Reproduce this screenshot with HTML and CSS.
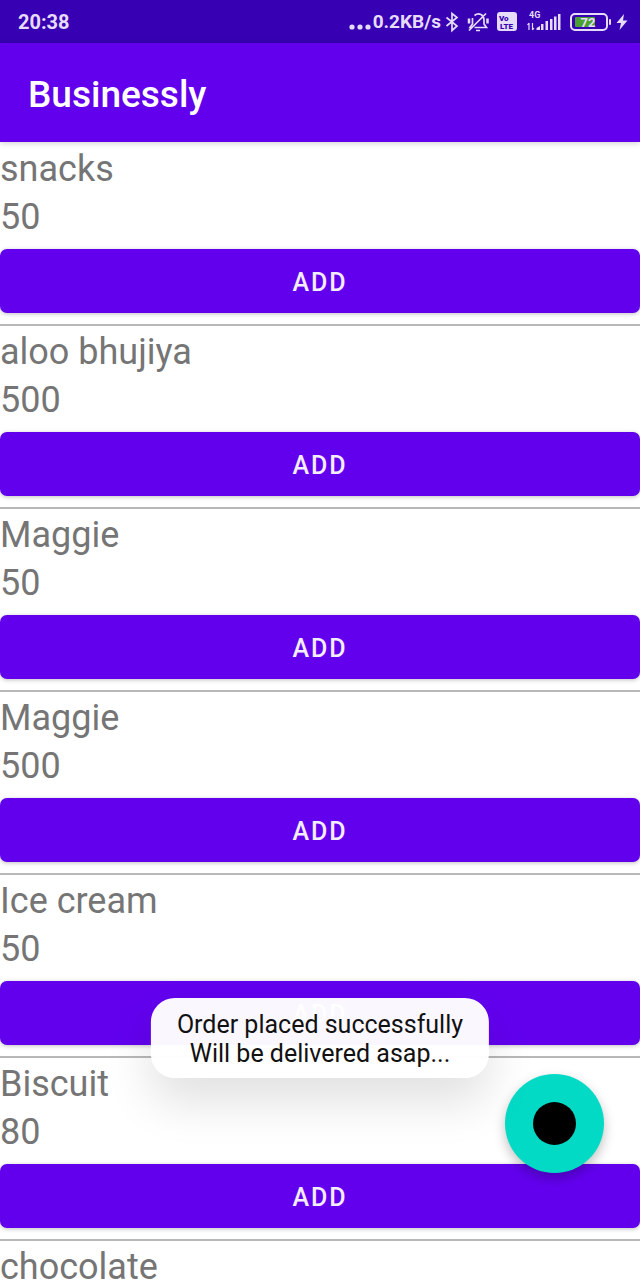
FILE: index.html
```html
<!DOCTYPE html>
<html lang="en">
<head>
<meta charset="utf-8">
<meta name="viewport" content="width=device-width, initial-scale=1">
<title>Businessly</title>
<link rel="stylesheet" href="styles.css">
</head>
<body>
<div class="screen">
  <div class="status-bar">
    <span class="clock">20:38</span>
    <div class="status-icons">
      <svg class="dots" width="24" height="24" viewBox="0 0 24 24" fill="currentColor" aria-hidden="true"><circle cx="4" cy="17" r="2.6"/><circle cx="12" cy="17" r="2.6"/><circle cx="20" cy="17" r="2.6"/></svg>
      <span class="speed">0.2KB/s</span>
      <svg class="bluetooth" width="14" height="22" viewBox="0 0 14 22" fill="none" stroke="currentColor" stroke-width="1.7" aria-label="Bluetooth"><path d="M1.5 6.500 12 15 7 19.500V2.500l5 4L1.500 15"/></svg>
      <svg class="bell" width="22" height="22" viewBox="0 0 22 22" fill="none" stroke="currentColor" stroke-width="1.7" aria-label="Silent"><path d="M7.500 4.500C12 1 17 4 17 9v4l2.500 3.500H7.500M5.500 7v6L3 16.500h1.500M9 19.500h4M19 2.500 2 19.500"/><path d="M2 7.500v5M20.500 7.500v5" stroke-width="2.500"/></svg>
      <svg class="volte" width="20" height="19" viewBox="0 0 20 19" aria-label="VoLTE"><rect width="20" height="19" rx="3" fill="currentColor"/><text x="2" y="9" class="volte-text">Vo</text><text x="3" y="17" class="volte-text">LTE</text></svg>
      <svg class="signal" width="34" height="24" viewBox="0 0 34 24" fill="currentColor" aria-label="Signal"><text x="2" y="8" class="network-text">4G</text><path d="M9.500 20v-2l3.500-2v4zM14 20v-6h2.500v6zM18.500 20v-9H21v9zM23 20V9h2.500v11zM27 20V6.500h2.500V20zM31 20V4h2.500v16z"/><path d="M2 20v-7M.5 15 2 13M5.500 13v7M7 18l-1.500 2" fill="none" stroke="currentColor" stroke-width="1.200"/></svg>
      <svg class="battery" width="42" height="20" viewBox="0 0 42 20" aria-label="Battery"><rect x="1" y="2" width="36" height="16" rx="4" fill="none" stroke="currentColor" stroke-width="2"/><rect x="5" y="5" width="20" height="10" rx="1" fill="#4ba12f"/><rect x="39" y="7" width="2" height="6" rx="1" fill="currentColor"/><text x="18" y="15" class="battery-text">72</text></svg>
      <svg class="bolt" width="12" height="18" viewBox="0 0 12 18" fill="currentColor" aria-label="Charging"><path d="M8 1 .5 10H5L3.500 17 11.500 7.500H7z"/></svg>
    </div>
  </div>
  <header class="app-bar"><h1 class="app-title">Businessly</h1></header>
  <main class="products">
    <section class="product"><h2 class="product-text">snacks</h2><p class="product-text">50</p><button class="add" type="button">ADD</button></section>
    <section class="product"><h2 class="product-text">aloo bhujiya</h2><p class="product-text">500</p><button class="add" type="button">ADD</button></section>
    <section class="product"><h2 class="product-text">Maggie</h2><p class="product-text">50</p><button class="add" type="button">ADD</button></section>
    <section class="product"><h2 class="product-text">Maggie</h2><p class="product-text">500</p><button class="add" type="button">ADD</button></section>
    <section class="product"><h2 class="product-text">Ice cream</h2><p class="product-text">50</p><button class="add" type="button">ADD</button></section>
    <section class="product"><h2 class="product-text">Biscuit</h2><p class="product-text">80</p><button class="add" type="button">ADD</button></section>
    <section class="product"><h2 class="product-text">chocolate</h2></section>
  </main>
  <button class="fab" type="button" aria-label="Place order"><span class="fab-dot"></span></button>
  <div class="toast" role="status">Order placed successfully<br>Will be delivered asap...</div>
</div>
</body>
</html>
```
FILE: styles.css
```css
* {
  box-sizing: border-box;
}

body {
  margin: 0;
  background: #fff;
  font-family: Roboto, "Liberation Sans", sans-serif;
}

.screen {
  position: relative;
  display: flex;
  flex-direction: column;
  height: 100vh;
  overflow: hidden;
}

.status-bar {
  display: flex;
  flex: none;
  align-items: center;
  justify-content: space-between;
  height: 43px;
  padding: 0 12px 0 18px;
  background: #3700b3;
  color: #e6dcfa;
  font-size: 20px;
  font-weight: 700;
}

.status-icons {
  display: flex;
  align-items: center;
}

.dots {
  margin-right: 1px;
}

.speed {
  font-size: 19px;
}

.bluetooth {
  margin-left: 4px;
}

.bell {
  margin-left: 8px;
}

.volte {
  margin-left: 8px;
}

.signal {
  margin-left: 10px;
}

.battery {
  margin-left: 9px;
}

.bolt {
  margin-left: 4px;
}

.volte-text {
  fill: #3700b3;
  font-size: 8px;
  font-weight: 900;
}

.network-text {
  font-size: 9px;
  font-weight: 700;
}

.battery-text {
  fill: currentColor;
  font-size: 13px;
  font-weight: 700;
  text-anchor: middle;
}

.app-bar {
  position: relative;
  z-index: 1;
  display: flex;
  flex: none;
  align-items: center;
  height: 99px;
  padding: 4px 28px 0;
  background: #6200ee;
  box-shadow: 0 1px 6px rgba(0, 0, 0, 0.2);
}

.app-title {
  margin: 0;
  color: #fff;
  font-size: 37px;
  font-weight: 500;
  line-height: 48px;
}

.products {
  flex: 1;
  min-height: 0;
  padding-top: 1px;
  overflow: hidden;
}

.product {
  display: flex;
  flex-direction: column;
  padding-bottom: 10px;
  border-bottom: 2px solid #b8b8b8;
}

.product-text {
  margin: 0;
  padding-top: 4px;
  color: #757575;
  font-size: 36px;
  font-weight: 400;
  line-height: 44px;
}

.add {
  height: 64px;
  margin-top: 11px;
  padding: 2px 0 0;
  border: 0;
  border-radius: 7px;
  background: #6200ee;
  box-shadow: 0 1px 4px rgba(0, 0, 0, 0.25);
  color: #f4ecff;
  font-family: inherit;
  font-size: 25px;
  font-weight: 500;
  letter-spacing: 2px;
}

.product .add {
  margin-top: 10px;
  margin-bottom: 1px;
}

.fab {
  position: absolute;
  right: 36px;
  bottom: 107px;
  display: flex;
  align-items: center;
  justify-content: center;
  width: 99px;
  height: 99px;
  padding: 0;
  border: 0;
  border-radius: 50%;
  background: #03dac6;
  box-shadow: 0 5px 12px rgba(0, 0, 0, 0.25);
}

.fab-dot {
  width: 43px;
  height: 43px;
  border-radius: 50%;
  background: #000;
}

.toast {
  position: absolute;
  bottom: 202px;
  left: 50%;
  padding: 12px 26px 10px;
  border-radius: 24px;
  background: rgba(255, 255, 255, 0.97);
  box-shadow: 0 24px 48px rgba(0, 0, 0, 0.12);
  color: #111;
  font-size: 25px;
  line-height: 29px;
  text-align: center;
  white-space: nowrap;
  transform: translateX(-50%);
}
```
